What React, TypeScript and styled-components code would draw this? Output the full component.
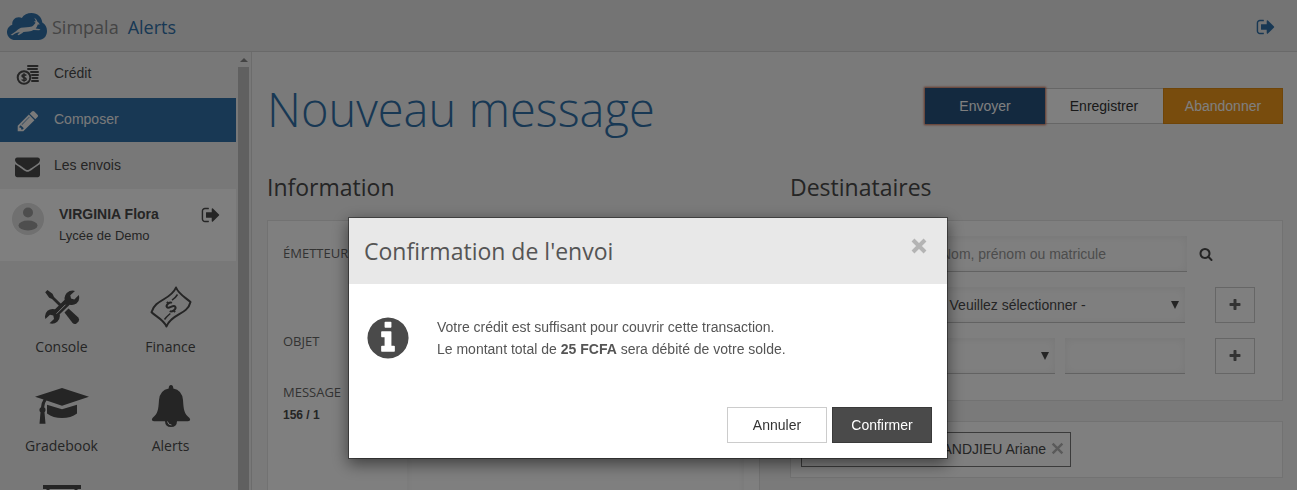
import React from 'react';
import styled, { createGlobalStyle, css } from 'styled-components';

const sans = `"Liberation Sans", Arial, sans-serif`;
const display = `"Open Sans", sans-serif`;
const blue = '#3071a9';

const GlobalStyle = createGlobalStyle`
  * { box-sizing: border-box; }
  body {
    margin: 0;
    background: #f4f4f4;
    color: #4a4a4a;
    font: 14px/20px ${sans};
  }
  button, input, select, textarea { font: inherit; color: inherit; margin: 0; border-radius: 0; }
  a { color: inherit; text-decoration: none; }
  h1, h2, p { margin: 0; font-weight: 400; }
`;

/* ---------- icons ---------- */

const glyphs = {
  info: 'M1152 1376v-160q0-14-9-23t-23-9h-96v-512q0-14-9-23t-23-9h-320q-14 0-23 9t-9 23v160q0 14 9 23t23 9h96v320h-96q-14 0-23 9t-9 23v160q0 14 9 23t23 9h448q14 0 23-9t9-23zm-128-896v-160q0-14-9-23t-23-9h-192q-14 0-23 9t-9 23v160q0 14 9 23t23 9h192q14 0 23-9t9-23zm640 416q0 209-103 385.5t-279.5 279.5-385.5 103-385.5-103-279.5-279.5-103-385.5 103-385.5 279.5-279.5 385.5-103 385.5 103 279.5 279.5 103 385.5z',
  signOut: 'M704 1440q0 4 1 20t.5 26.5-3 23.5-10 19.5-20.5 6.5h-320q-119 0-203.5-84.5t-84.5-203.5v-704q0-119 84.5-203.5t203.5-84.5h320q13 0 22.5 9.5t9.5 22.5q0 4 1 20t.5 26.5-3 23.5-10 19.5-20.5 6.5h-320q-66 0-113 47t-47 113v704q0 66 47 113t113 47h312l11.5 1 11.5 3 8 5.5 7 9 2 13.5zm928-544q0 26-19 45l-544 544q-19 19-45 19t-45-19-19-45v-288h-448q-26 0-45-19t-19-45v-384q0-26 19-45t45-19h448v-288q0-26 19-45t45-19 45 19l544 544q19 19 19 45z',
  pencil: 'M491 1536l91-91-235-235-91 91v107h128v128h107zm523-928q0-22-22-22-10 0-17 7l-542 542q-7 7-7 17 0 22 22 22 10 0 17-7l542-542q7-7 7-17zm-54-192l416 416-832 832h-416v-416zm683 96q0 53-37 90l-166 166-416-416 166-165q36-38 90-38 53 0 91 38l235 234q37 39 37 91z',
  envelope: 'M1792 710v794q0 66-47 113t-113 47h-1472q-66 0-113-47t-47-113v-794q44 49 101 87 362 246 497 345 57 42 92.5 65.5t94.5 48 110 24.5h2q51 0 110-24.5t94.5-48 92.5-65.5q170-123 498-345 57-39 100-87zm0-294q0 79-49 151t-122 123q-376 261-468 325-10 7-42.5 31t-54 38.5-52 32.5-57.5 27-50 9h-2q-23 0-50-9t-57.5-27-52-32.5-54-38.5-42.5-31q-91-64-262-182.5t-205-142.5q-62-42-117-115.5t-55-136.5q0-78 41.5-130t118.5-52h1472q65 0 112.5 47t47.5 113z',
  search: 'M1216 832q0-185-131.5-316.5t-316.5-131.5-316.5 131.5-131.5 316.5 131.5 316.5 316.5 131.5 316.5-131.5 131.5-316.5zm512 832q0 52-38 90t-90 38q-54 0-90-38l-343-342q-179 124-399 124-143 0-273.5-55.5t-225-150-150-225-55.5-273.5 55.5-273.5 150-225 225-150 273.5-55.5 273.5 55.5 225 150 150 225 55.5 273.5q0 220-124 399l343 343q37 37 37 90z',
  plus: 'M1600 736v192q0 40-28 68t-68 28h-416v416q0 40-28 68t-68 28h-192q-40 0-68-28t-28-68v-416h-416q-40 0-68-28t-28-68v-192q0-40 28-68t68-28h416v-416q0-40 28-68t68-28h192q40 0 68 28t28 68v416h416q40 0 68 28t28 68z',
};

const Svg = styled.svg`
  display: block;
  flex: none;
`;

const Glyph = ({ name, size }: { name: keyof typeof glyphs; size: number }) => (
  <Svg width={size} height={size} viewBox="0 0 1792 1792" fill="currentColor" aria-hidden="true">
    <path d={glyphs[name]} />
  </Svg>
);

const Cross = ({ size, weight }: { size: number; weight: number }) => (
  <Svg width={size} height={size} viewBox="0 0 16 16" stroke="currentColor" strokeWidth={weight} aria-hidden="true">
    <path d="M2 2l12 12M14 2L2 14" />
  </Svg>
);

const CloudLogo = () => (
  <Svg width="40" height="27" viewBox="0 0 40 27" aria-hidden="true">
    <path
      fill={blue}
      d="M8.5 27C3.5 27 0 23.5 0 19.2C0 15.5 2.2 12.800 5.3 11.700C4.800 7.500 8 4 12 4.200C13.200 4.300 14 4.500 14.800 4.900C16.800 1.500 20.500 0 24.500 0C30.500 0 34.700 4 35.300 9.600C38.300 11.200 40 14.200 40 18C40 23.200 36.500 27 31.500 27Z"
    />
    <path
      fill="#e8e8e8"
      d="M3.500 22L9 18.200C10.500 16.800 12 15.400 14 14.700C18 13.800 21.500 14.600 25 13.400C26.500 12.600 27.600 11.200 28.600 9.800L26.800 8.600L28.800 8.300C28.500 7 28 6 27.200 4.800C28.800 5.600 29.800 6.800 30.300 8.400C31 8.900 32 9.800 32.800 11.400L30.800 11.600C30.300 13.200 29.600 14.500 28.700 15.400L33.500 16.200L32.200 17.300L26.500 17C24 18.500 19.500 18.500 16.500 19C15 20.300 13.500 21.200 11.500 22.200L10.500 21.400L12.800 19.300C10.500 19.200 8 20.600 5.500 22.200Z"
    />
  </Svg>
);

const Coins = () => (
  <Svg width="24" height="22" viewBox="0 0 24 22" fill="none" stroke="currentColor" aria-hidden="true">
    <path
      strokeWidth="2"
      strokeLinecap="round"
      d="M12 2h9.500M12 5h9M15 8h7M16 11h6M16.500 14h5M16 17h6"
    />
    <circle cx="8" cy="13.500" r="6.300" strokeWidth="2" />
    <path strokeWidth="1.500" d="M10.300 11.500C9.500 10.300 6 10.300 6 12C6 13.800 10.200 13.200 10.200 15.200C10.200 17 6.500 16.900 5.700 15.500M8 9.300v8.400" />
  </Svg>
);

const Tools = () => (
  <Svg width="36" height="36" viewBox="0 0 36 36" fill="currentColor" aria-hidden="true">
    <path d="M1.200 3.200L3.400 1L8.500 4.800L10 8L18.200 16L16.200 18L8 10L5.200 8.800Z" />
    <path d="M20.500 23.600L24.500 19.600L34.300 28.600Q36 30.500 34.500 32.400L32.800 34.200Q30.500 36 28.600 34Z" />
    <path d="M31 1.900L26.300 6.300L27 9.600L30.300 10.400L34.800 6Q36.300 11.500 32.500 14.600Q29.200 16.800 25.700 15.700L15.700 25.300Q16.600 29.500 13.300 32.700Q10 35.500 5.500 34.300L10 29.900L9.300 26.500L6 25.700L1.400 30Q0 25.200 3.500 21.800Q7 19 11 20.300L20.700 10.800Q19.800 7 22.700 3.900Q26.500 .8 31 1.900Z" />
    <path d="M12.500 24.700L21.500 15.700" stroke="#f1f1f1" strokeWidth="1" />
  </Svg>
);

const Banknote = () => (
  <Svg width="42" height="42" viewBox="0 0 42 42" fill="none" stroke="currentColor" aria-hidden="true">
    <path
      strokeWidth="2"
      strokeLinejoin="round"
      d="M26 1.500C28.500 8 35.500 11.500 40.500 16C37.500 29 21.500 27.500 16.500 40.500C13.500 33.500 6 30.500 1.500 26.300C5 13 21 14 26 1.500Z"
    />
    <path strokeWidth="1.500" d="M22 14.200C24.500 12.500 26 11 27.500 8.500M14.500 33.500C16.500 30.500 18 29.500 20.300 27.500" />
    <g transform="rotate(-38 21 21)" strokeWidth="2">
      <path d="M24.300 18.300C23.300 16 17.700 16 17.700 18.700C17.700 21.500 24.500 20.300 24.500 23.300C24.500 26 18.500 26 17.400 23.500" />
      <path d="M21 14.500v2.500M21 25v2.500" />
    </g>
  </Svg>
);

const GradCap = () => (
  <Svg width="54" height="38" viewBox="0 0 54 38" fill="currentColor" aria-hidden="true">
    <path d="M27 1L54 9.800L27 18.800L11.500 13.600Q9.300 16 9.200 20.300Q10.800 21.300 10.500 23.200Q10.300 24.500 9.500 25.200L10.500 36.800H4.500L5.500 25.200Q4.300 24.300 4.400 22.700Q4.500 21 6 20.300Q6.300 15.500 8.500 12.500L0 9.800Z" />
    <path d="M12 17.700L27 22.300L42 17.700V26.500Q36 31 27 31T12 26.500Z" />
  </Svg>
);

const Bell = () => (
  <Svg width="40" height="42" viewBox="0 0 40 42" fill="currentColor" aria-hidden="true">
    <path d="M20 0Q22.300 0 22.300 3.500Q31 5 32 15C32.700 25 33 28.500 38.500 33Q40.300 36 37 36.300H3Q-.3 36 1.500 33C7 28.500 7.300 25 8 15Q9 5 17.700 3.500Q17.700 0 20 0Z" />
    <path d="M14 36H26Q26 42 20 42T14 36Z" />
    <path d="M16.500 36.500Q17 40 20.500 40" fill="none" stroke="#f1f1f1" />
  </Svg>
);

const Board = () => (
  <Svg width="38" height="40" viewBox="0 0 38 40" fill="none" stroke="currentColor" aria-hidden="true">
    <path d="M0 2h38" strokeWidth="4" />
    <path d="M5 4v22h28V4M19 26v12" strokeWidth="3" />
  </Svg>
);

/* ---------- shell ---------- */

const Page = styled.div`
  height: 100vh;
  display: flex;
  flex-direction: column;
  overflow: hidden;
`;

const TopBar = styled.header`
  flex: none;
  height: 52px;
  padding: 2px 21px 0 7px;
  display: flex;
  align-items: center;
  justify-content: space-between;
  background: #e8e8e8;
  border-bottom: 1px solid #d2d2d2;
`;

const Brand = styled.a`
  display: flex;
  align-items: center;
  gap: 5px;
  font: 18px/24px ${display};
  color: #8a8a8a;
`;

const BrandProduct = styled.span`
  margin-left: 4px;
  color: ${blue};
`;

const IconLink = styled.a<{ $blue?: boolean }>`
  color: ${(p) => (p.$blue ? blue : '#4a4a4a')};
`;

const Columns = styled.div`
  flex: 1;
  min-height: 0;
  display: flex;
`;

const Sidebar = styled.aside`
  flex: none;
  width: 252px;
  display: flex;
  gap: 2px;
  overflow: hidden;
  background: #f1f1f1;
  border-right: 1px solid #d8d8d8;
`;

const SidebarContent = styled.div`
  width: 236px;
`;

const ScrollTrack = styled.div`
  width: 11px;
  display: flex;
  flex-direction: column;
  align-items: center;
  gap: 5px;
  padding-top: 6px;
`;

const ScrollThumb = styled.div`
  flex: 1;
  width: 100%;
  background: #c1c1c1;
`;

const Nav = styled.nav`
  display: flex;
  flex-direction: column;
  gap: 2px;
`;

const NavItem = styled.a<{ $active?: boolean }>`
  height: 44px;
  padding: 0 0 3px 13px;
  display: grid;
  grid-template-columns: 29px 1fr;
  gap: 12px;
  align-items: center;
  ${(p) => p.$active && css`background: ${blue}; color: #f4f4f4;`}
`;

const NavIcon = styled.span`
  display: flex;
  justify-content: center;
  padding-top: 4px;
`;

const UserPanel = styled.section`
  height: 72px;
  margin-top: 1px;
  padding: 14px 15px 0 12px;
  display: flex;
  align-items: flex-start;
  background: #fff;

  ${IconLink} { padding-top: 2px; }
`;

const UserText = styled.div`
  flex: 1;
  margin-left: 15px;
  line-height: 22px;
`;

const School = styled.div`
  font-size: 13px;
`;

const Tiles = styled.div`
  display: grid;
  grid-template-columns: 1fr 1fr;
  row-gap: 29px;
  padding: 26px 11px 0 7px;
`;

const Tile = styled.a`
  display: flex;
  flex-direction: column;
  align-items: center;
  gap: 10px;
  font-family: ${display};
`;

const TileIcon = styled.span`
  height: 40px;
  display: flex;
  align-items: center;
`;

/* ---------- content ---------- */

const Main = styled.main`
  flex: 1;
  min-width: 0;
  padding: 20px 14px 0 15px;
`;

const TitleRow = styled.div`
  display: flex;
  align-items: flex-start;
  justify-content: space-between;
  padding-bottom: 25px;
`;

const Title = styled.h1`
  font: 300 47px/74px ${display};
  color: ${blue};
`;

const ButtonGroup = styled.div`
  display: flex;
  padding-top: 16px;

  > * + * { margin-left: -1px; }
  > :first-child { position: relative; }
`;

const tones = {
  primary: css`background: #26527f; border-color: #26527f; color: #fff; box-shadow: 0 0 2px 1px #c8684c;`,
  plain: css`background: #fff; border-color: #ccc; color: #333;`,
  warning: css`background: #f0981b; border-color: #df8a13; color: #fff;`,
  dark: css`background: #4a4a4a; border-color: #3a3a3a; color: #fff;`,
};

const Button = styled.button<{ $tone: keyof typeof tones; $width: number }>`
  width: ${(p) => p.$width}px;
  height: 36px;
  padding: 0;
  border: 1px solid;
  ${(p) => tones[p.$tone]}
`;

const Panels = styled.div`
  display: grid;
  grid-template-columns: 1fr 1fr;
  gap: 30px;
`;

const SectionTitle = styled.h2`
  margin-bottom: 17px;
  font: 23px/32px ${display};
`;

const Card = styled.div`
  padding: 15px;
  margin-bottom: 20px;
  background: #fff;
  border: 1px solid #e4e4e4;
`;

const field = css`
  display: block;
  width: 100%;
  height: 36px;
  padding: 0 12px;
  border: 0;
  border-bottom: 1px solid #c4c4c4;
  background: #fff;
  box-shadow: inset 0 1px 8px rgba(0, 0, 0, 0.07);
`;

const Input = styled.input`
  ${field}
  &::placeholder { color: #999; opacity: 1; }
`;

const Textarea = styled.textarea`
  ${field}
  height: 180px;
  resize: none;
`;

const FormRow = styled.div<{ $height: number }>`
  display: grid;
  grid-template-columns: 124px 1fr;
  align-items: start;
  min-height: ${(p) => p.$height}px;
`;

const Label = styled.label`
  display: block;
  font: 13px/22px ${display};
  padding-top: 6px;
  color: #666;
`;

const Counter = styled.div`
  font-size: 12px;
  line-height: 24px;
  font-weight: 700;
`;

const Filters = styled(Card)`
  display: flex;
  flex-direction: column;
  gap: 15px;
  padding: 15px 27px 26px 138px;
`;

const FilterRow = styled.div`
  display: flex;
  gap: 10px;
`;

const Grow = styled.div`
  flex: 1;
  min-width: 0;
`;

const SearchButton = styled.button`
  width: 58px;
  padding: 0 0 0 2px;
  border: 0;
  background: none;
`;

const AddButton = styled.button`
  flex: none;
  width: 40px;
  height: 36px;
  margin-left: 20px;
  padding: 0;
  display: flex;
  align-items: center;
  justify-content: center;
  border: 1px solid #ccc;
  background: #fff;
  color: #666;
`;

const Narrow = styled.div`
  width: 120px;
`;

const SelectBox = styled.div`
  position: relative;
  flex: 1;
  min-width: 0;
`;

const SelectField = styled.select`
  ${field}
  appearance: none;
`;

const Caret = styled.span`
  position: absolute;
  right: 6px;
  top: 14px;
  pointer-events: none;
`;

const Select = ({ label, option }: { label: string; option: string }) => (
  <SelectBox>
    <SelectField aria-label={label}>
      <option>{option}</option>
    </SelectField>
    <Caret>
      <Svg width="8" height="8" viewBox="0 0 8 8" fill="currentColor" aria-hidden="true">
        <path d="M0 0h8L4 8z" />
      </Svg>
    </Caret>
  </SelectBox>
);

const Chips = styled(Card)`
  padding: 10px;
`;

const Chip = styled.div`
  width: 270px;
  height: 35px;
  padding: 0 6px 2px;
  display: flex;
  align-items: center;
  justify-content: flex-end;
  gap: 5px;
  border: 1px solid #777;
`;

const BareButton = styled.button`
  padding: 0;
  border: 0;
  background: none;
  color: #b4b4b4;
`;

/* ---------- dialog ---------- */

const Backdrop = styled.div`
  position: fixed;
  inset: 0;
  padding: 217px 1px 0 0;
  background: rgba(0, 0, 0, 0.5);
`;

const Dialog = styled.section`
  max-width: 600px;
  margin: 0 auto;
  background: #fff;
  background-clip: padding-box;
  border: 1px solid rgba(0, 0, 0, 0.4);
  box-shadow: 0 5px 15px rgba(0, 0, 0, 0.5);
  color: #555;
`;

const DialogHeader = styled.header`
  height: 66px;
  padding: 17px 20px 17px 15px;
  display: flex;
  align-items: flex-start;
  justify-content: space-between;
  background: #e8e8e8;
`;

const DialogTitle = styled.h2`
  font: 23px/32px ${display};
`;

const CloseButton = styled(BareButton)`
  padding-top: 3px;
`;

const DialogBody = styled.div`
  display: flex;
  align-items: center;
  gap: 25px;
  padding: 30px 15px 45px;
  line-height: 22px;
`;

const InfoMark = styled.span`
  color: #4a4a4a;
`;

const DialogFooter = styled.footer`
  display: flex;
  justify-content: flex-end;
  gap: 5px;
  padding: 0 15px 15px;
`;

const tiles = [
  { label: 'Console', icon: <Tools /> },
  { label: 'Finance', icon: <Banknote /> },
  { label: 'Gradebook', icon: <GradCap /> },
  { label: 'Alerts', icon: <Bell /> },
  { label: '', icon: <Board /> },
];

export default function App() {
  return (
    <>
      <GlobalStyle />
      <Page>
        <TopBar>
          <Brand href="#">
            <CloudLogo />
            <span>Simpala</span>
            <BrandProduct>Alerts</BrandProduct>
          </Brand>
          <IconLink href="#" $blue aria-label="Déconnexion">
            <Glyph name="signOut" size={20} />
          </IconLink>
        </TopBar>
        <Columns>
          <Sidebar>
            <SidebarContent>
              <Nav>
                <NavItem href="#">
                  <NavIcon><Coins /></NavIcon>
                  Crédit
                </NavItem>
                <NavItem href="#" $active>
                  <NavIcon><Glyph name="pencil" size={24} /></NavIcon>
                  Composer
                </NavItem>
                <NavItem href="#">
                  <NavIcon><Glyph name="envelope" size={25} /></NavIcon>
                  Les envois
                </NavItem>
              </Nav>
              <UserPanel>
                <Svg width="32" height="32" viewBox="0 0 32 32" aria-hidden="true">
                  <circle cx="16" cy="16" r="16" fill="#e0e0e0" />
                  <circle cx="16" cy="9.500" r="5" fill="#9c9c9c" />
                  <ellipse cx="16" cy="22.500" rx="9.500" ry="5" fill="#9c9c9c" />
                </Svg>
                <UserText>
                  <strong>VIRGINIA Flora</strong>
                  <School>Lycée de Demo</School>
                </UserText>
                <IconLink href="#" aria-label="Déconnexion">
                  <Glyph name="signOut" size={20} />
                </IconLink>
              </UserPanel>
              <Tiles>
                {tiles.map((t, i) => (
                  <Tile href="#" key={i}>
                    <TileIcon>{t.icon}</TileIcon>
                    {t.label}
                  </Tile>
                ))}
              </Tiles>
            </SidebarContent>
            <ScrollTrack>
              <Svg width="8" height="4" viewBox="0 0 8 4" fill="#888" aria-hidden="true">
                <path d="M0 4L4 0l4 4z" />
              </Svg>
              <ScrollThumb />
            </ScrollTrack>
          </Sidebar>
          <Main>
            <TitleRow>
              <Title>Nouveau message</Title>
              <ButtonGroup>
                <Button type="button" $tone="primary" $width={120}>Envoyer</Button>
                <Button type="button" $tone="plain" $width={120}>Enregistrer</Button>
                <Button type="button" $tone="warning" $width={120}>Abandonner</Button>
              </ButtonGroup>
            </TitleRow>
            <Panels>
              <section>
                <SectionTitle>Information</SectionTitle>
                <Card>
                  <FormRow $height={88}>
                    <Label htmlFor="sender">ÉMETTEUR</Label>
                    <Input id="sender" />
                  </FormRow>
                  <FormRow $height={51}>
                    <Label htmlFor="subject">OBJET</Label>
                    <Input id="subject" />
                  </FormRow>
                  <FormRow $height={180}>
                    <div>
                      <Label htmlFor="message">MESSAGE</Label>
                      <Counter>156 / 1</Counter>
                    </div>
                    <Textarea id="message" />
                  </FormRow>
                </Card>
              </section>
              <section>
                <SectionTitle>Destinataires</SectionTitle>
                <Filters>
                  <FilterRow>
                    <Grow><Input aria-label="Recherche" placeholder="Nom, prénom ou matricule" /></Grow>
                    <SearchButton type="button" aria-label="Rechercher">
                      <Glyph name="search" size={14} />
                    </SearchButton>
                  </FilterRow>
                  <FilterRow>
                    <Select label="Groupe" option="- Veuillez sélectionner -" />
                    <AddButton type="button" aria-label="Ajouter le groupe">
                      <Glyph name="plus" size={14} />
                    </AddButton>
                  </FilterRow>
                  <FilterRow>
                    <Select label="Type" option="" />
                    <Narrow><Input aria-label="Numéro" /></Narrow>
                    <AddButton type="button" aria-label="Ajouter le numéro">
                      <Glyph name="plus" size={14} />
                    </AddButton>
                  </FilterRow>
                </Filters>
                <Chips>
                  <Chip>
                    ANDJIEU Ariane
                    <BareButton type="button" aria-label="Retirer">
                      <Cross size={13} weight={3} />
                    </BareButton>
                  </Chip>
                </Chips>
              </section>
            </Panels>
          </Main>
        </Columns>
      </Page>
      <Backdrop>
        <Dialog role="dialog" aria-modal="true" aria-labelledby="dialog-title">
          <DialogHeader>
            <DialogTitle id="dialog-title">Confirmation de l'envoi</DialogTitle>
            <CloseButton type="button" aria-label="Fermer">
              <Cross size={16} weight={4} />
            </CloseButton>
          </DialogHeader>
          <DialogBody>
            <InfoMark><Glyph name="info" size={48} /></InfoMark>
            <p>
              Votre crédit est suffisant pour couvrir cette transaction.
              <br />
              Le montant total de <strong>25 FCFA</strong> sera débité de votre solde.
            </p>
          </DialogBody>
          <DialogFooter>
            <Button type="button" $tone="plain" $width={100}>Annuler</Button>
            <Button type="button" $tone="dark" $width={100}>Confirmer</Button>
          </DialogFooter>
        </Dialog>
      </Backdrop>
    </>
  );
}
